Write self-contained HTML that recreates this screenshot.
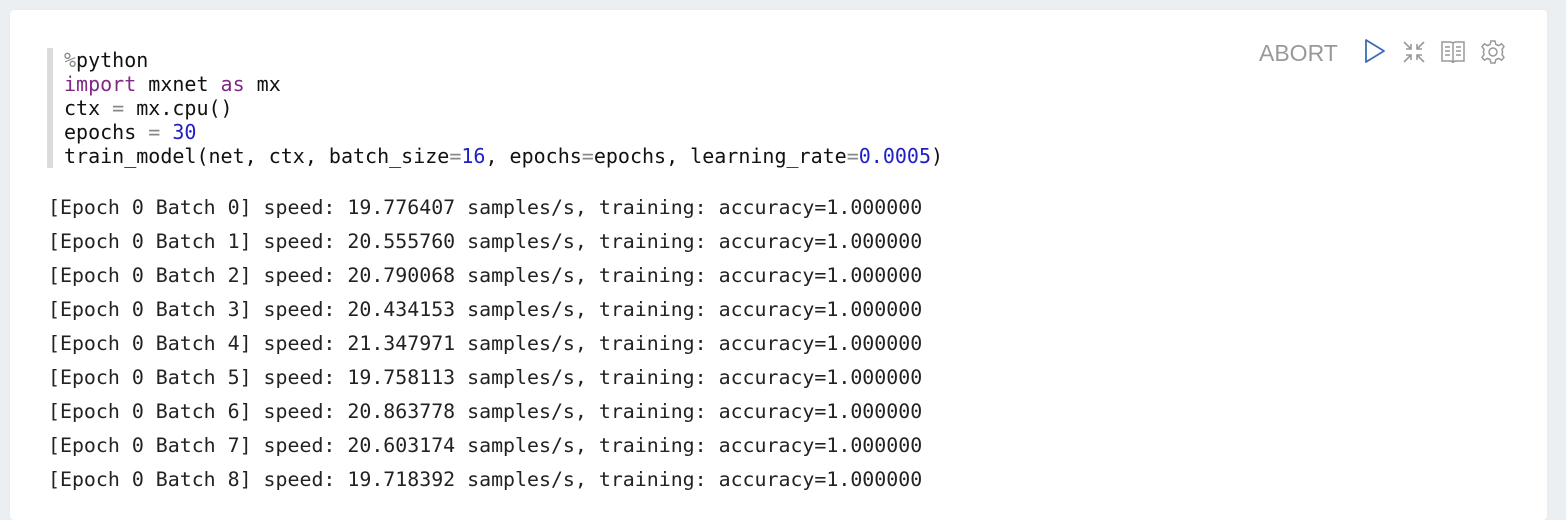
<!DOCTYPE html>
<html><head><meta charset="utf-8"><style>
html,body{margin:0;padding:0;width:1566px;height:509px;overflow:hidden;background:#eceff1;}
.card{position:absolute;left:10px;top:10px;width:1537px;height:510px;background:#fff;border-radius:4px;box-shadow:0 0 1px #d8dcdf;}
.code{position:absolute;left:37px;top:38px;border-left:6px solid #dcdcdc;padding-left:11px;font-family:"DejaVu Sans Mono","Liberation Mono",monospace;font-size:20px;line-height:24px;color:#111;white-space:pre;}
.kw{color:#7f2a85}.num{color:#1f1fc4}.op{color:#888}
.out{position:absolute;left:38px;top:181px;font-family:"DejaVu Sans Mono","Liberation Mono",monospace;font-size:19.9px;line-height:34px;color:#222;white-space:pre;}
.abort{position:absolute;left:1249px;top:30px;font-family:"Liberation Sans",sans-serif;font-size:23px;color:#999;}
svg{position:absolute}
</style></head><body>
<div class="card">
<div class="code"><span class="op">%</span>python
<span class="kw">import</span> mxnet <span class="kw">as</span> mx
ctx <span class="op">=</span> mx.cpu()
epochs <span class="op">=</span> <span class="num">30</span>
train_model(net, ctx, batch_size<span class="op">=</span><span class="num">16</span>, epochs<span class="op">=</span>epochs, learning_rate<span class="op">=</span><span class="num">0.0005</span>)</div>
<div class="out">[Epoch 0 Batch 0] speed: 19.776407 samples/s, training: accuracy=1.000000
[Epoch 0 Batch 1] speed: 20.555760 samples/s, training: accuracy=1.000000
[Epoch 0 Batch 2] speed: 20.790068 samples/s, training: accuracy=1.000000
[Epoch 0 Batch 3] speed: 20.434153 samples/s, training: accuracy=1.000000
[Epoch 0 Batch 4] speed: 21.347971 samples/s, training: accuracy=1.000000
[Epoch 0 Batch 5] speed: 19.758113 samples/s, training: accuracy=1.000000
[Epoch 0 Batch 6] speed: 20.863778 samples/s, training: accuracy=1.000000
[Epoch 0 Batch 7] speed: 20.603174 samples/s, training: accuracy=1.000000
[Epoch 0 Batch 8] speed: 19.718392 samples/s, training: accuracy=1.000000</div>
<div class="abort">ABORT</div>
</div>
<svg style="left:1360px;top:36px" width="30" height="30" viewBox="0 0 30 30"><path d="M6 4 L24 15 L6 26 Z" fill="none" stroke="#3d6bb3" stroke-width="1.8" stroke-linejoin="round"/></svg>
<svg style="left:1400px;top:38px" width="28" height="28" viewBox="0 0 28 28" fill="none" stroke="#999" stroke-width="1.6"><path d="M4 4 L11 11 M11 6 V11 H6"/><path d="M24 4 L17 11 M17 6 V11 H22"/><path d="M4 24 L11 17 M11 22 V17 H6"/><path d="M24 24 L17 17 M17 22 V17 H22"/></svg>
<svg style="left:1439px;top:38px" width="28" height="28" viewBox="0 0 28 28" fill="none" stroke="#999" stroke-width="1.5"><path d="M3 4 H11 Q14 4 14 6 Q14 4 17 4 H25 V23 H17 Q14 23 14 25 Q14 23 11 23 H3 Z"/><path d="M14 6 V25"/><path d="M6 9 H11 M6 13 H11 M6 17 H11 M17 9 H22 M17 13 H22 M17 17 H22"/></svg>
<svg style="left:1479px;top:38px" width="28" height="28" viewBox="0 0 28 28" fill="none" stroke="#999" stroke-width="1.5"><path d="M12 3 H16 L16.8 6.3 L19.5 7.6 L22.5 5.8 L25 8.6 L23 11.4 L23.6 14 L23 16.6 L25 19.4 L22.5 22.2 L19.5 20.4 L16.8 21.7 L16 25 H12 L11.2 21.7 L8.5 20.4 L5.5 22.2 L3 19.4 L5 16.6 L4.4 14 L5 11.4 L3 8.6 L5.5 5.8 L8.5 7.6 L11.2 6.3 Z"/><circle cx="14" cy="14" r="4"/></svg>
</body></html>
